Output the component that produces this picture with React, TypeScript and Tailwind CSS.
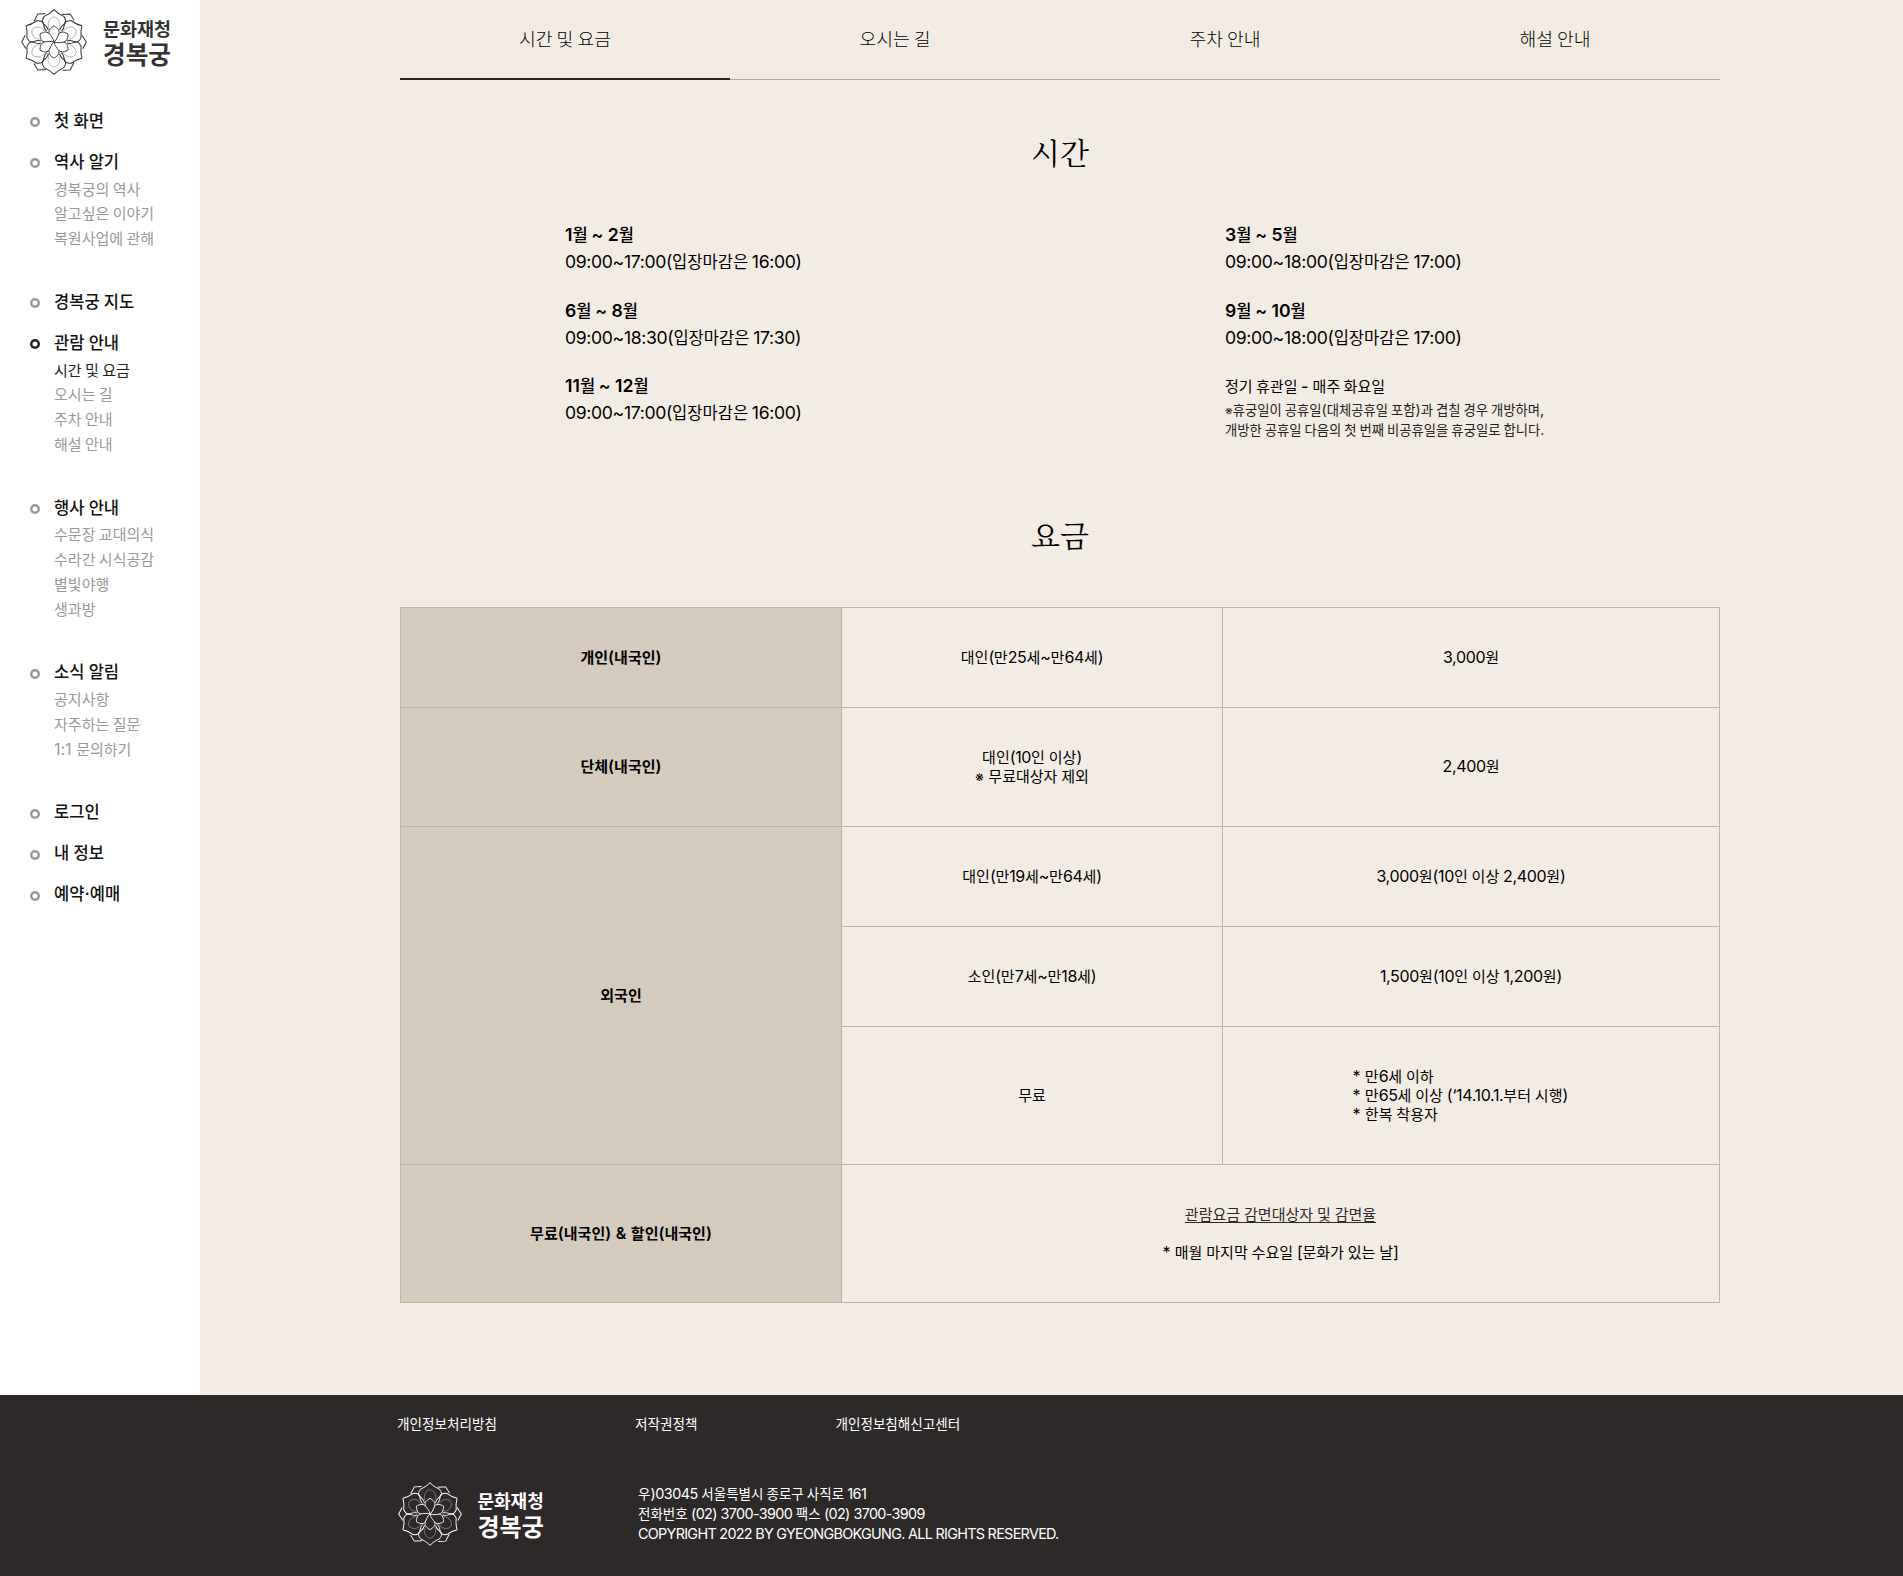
import type { ReactNode } from "react";

const HANGUL = /([\u3131-\uD79D][\u3131-\uD79D ]*)/;

/* Sets Hangul runs in Noto Sans and everything else in Inter. */
function T({ children }: { children: string }) {
  return (
    <>
      {children.split(HANGUL).map((run, i) =>
        i % 2 ? (
          <span key={i} className="font-['Noto_Sans_CJK_KR',sans-serif] text-[0.94em] leading-none tracking-normal">
            {run}
          </span>
        ) : (
          run
        ),
      )}
    </>
  );
}

function Flower({ className }: { className: string }) {
  return (
    <svg viewBox="-98 -98 196 196" className={className} fill="none" stroke="currentColor" strokeWidth="3" strokeLinejoin="round">
      {[0, 60, 120, 180, 240, 300].map((a) => (
        <g key={a} transform={`rotate(${a})`}>
          <path d="M0-96C-9-86-20-80-29-76C-36-66-38-60-31-53C-30-44-28-37-22-32" />
          <path d="M0-96C9-86 20-80 29-76C36-66 38-60 31-53C30-44 28-37 22-32" />
          <path d="M24-82L48-83L60-64" />
          <path d="M0 0C-2-12-9-17-14-25C-18-36-8-43 0-48C8-43 18-36 14-25" strokeWidth="2.6" />
          <path d="M-14-41C-18-48-18-54-16-60C-12-70-6-74 0-74C6-74 12-70 16-60C18-54 18-48 14-41" strokeWidth="2" opacity="0.5" />
        </g>
      ))}
    </svg>
  );
}

function Logo({ light = false }: { light?: boolean }) {
  return (
    <div className="flex items-center font-['Noto_Sans_CJK_KR',sans-serif]">
      <Flower className={light ? "size-16" : "size-[66px]"} />
      <div className={`flex flex-col pb-0.5 font-bold ${light ? "ml-[15.5px]" : "ml-4"}`}>
        <span className={light ? "text-[18px] leading-[24px]" : "text-[18.5px] leading-[24px]"}>문화재청</span>
        <span className={light ? "text-[24px] leading-[27px]" : "text-[24.6px] leading-[27px]"}>경복궁</span>
      </div>
    </div>
  );
}

const menu: { title: string; active?: boolean; items?: string[] }[] = [
  { title: "첫 화면" },
  { title: "역사 알기", items: ["경복궁의 역사", "알고싶은 이야기", "복원사업에 관해"] },
  { title: "경복궁 지도" },
  { title: "관람 안내", active: true, items: ["시간 및 요금", "오시는 길", "주차 안내", "해설 안내"] },
  { title: "행사 안내", items: ["수문장 교대의식", "수라간 시식공감", "별빛야행", "생과방"] },
  { title: "소식 알림", items: ["공지사항", "자주하는 질문", "1:1 문의하기"] },
  { title: "로그인" },
  { title: "내 정보" },
  { title: "예약·예매" },
];

function Sidebar() {
  return (
    <aside className="w-[200px] shrink-0 bg-white">
      <div className="flex h-[107.5px] items-start pl-[21px] pt-[9px] text-[#333]">
        <Logo />
      </div>
      <nav>
        {menu.map((m) => (
          <div key={m.title} className={m.items ? "mb-[38.4px]" : "mb-[13.8px]"}>
            <div className="flex h-[27.2px] items-center pl-[30px] text-[17.6px] font-medium text-[#111] [word-spacing:0.03em]">
              <span className={`mr-[14px] mt-0.5 size-2.5 rounded-full ${m.active ? "shadow-[inset_0_0_0_2.5px_#222]" : "shadow-[inset_0_0_0_2.5px_#999]"}`} />
              <span className="whitespace-pre"><T>{m.title}</T></span>
            </div>
            {m.items?.map((s, i) => (
              <div key={s} className={`h-[24.8px] pl-[54px] leading-[26.2px] ${m.active && i === 0 ? "text-[#222]" : "text-[#999]"}`}>
                <T>{s}</T>
              </div>
            ))}
          </div>
        ))}
      </nav>
    </aside>
  );
}

function Hours({ title, time }: { title: string; time: string }) {
  return (
    <div className="h-[75.6px] pl-[165px] text-[17.6px] leading-[27px]">
      <p className="font-semibold [&>span]:font-medium"><T>{title}</T></p>
      <p className="tracking-[-0.019em]"><T>{time}</T></p>
    </div>
  );
}

function Th({ children, rowSpan }: { children: string; rowSpan?: number }) {
  return (
    <th rowSpan={rowSpan} className="border border-[#beb4a8] bg-[#d4cabd] font-semibold tracking-normal">
      <T>{children}</T>
    </th>
  );
}

function Td({ children, colSpan }: { children: ReactNode; colSpan?: number }) {
  return (
    <td colSpan={colSpan} className="border border-[#beb4a8] text-center">
      {children}
    </td>
  );
}

function Title({ children }: { children: string }) {
  return <h2 className="text-center font-['Noto_Serif_CJK_KR',serif] text-[30px] leading-[40px]">{children}</h2>;
}

export default function App() {
  return (
    <div className="h-[1576px] w-[1903px] overflow-hidden bg-[#f3ece4] font-['Inter','Noto_Sans_CJK_KR',sans-serif] text-[16px] text-black">
      <div className="flex h-[1395px]">
        <Sidebar />
        <main className="ml-[200px] w-[1320px]">
          <div className="flex h-20 text-center text-[19.4px] font-light leading-[78px] text-black">
            {["시간 및 요금", "오시는 길", "주차 안내", "해설 안내"].map((t, i) => (
              <div key={t} className={`flex-1 ${i === 0 ? "border-b-2 border-[#2d2929]" : "border-b border-[#aaa]"}`}>
                <T>{t}</T>
              </div>
            ))}
          </div>

          <div className="pt-[51px]"><Title>시간</Title></div>
          <div className="grid grid-cols-2 pt-[50px]">
            <Hours title="1월 ~ 2월" time="09:00~17:00(입장마감은 16:00)" />
            <Hours title="3월 ~ 5월" time="09:00~18:00(입장마감은 17:00)" />
            <Hours title="6월 ~ 8월" time="09:00~18:30(입장마감은 17:30)" />
            <Hours title="9월 ~ 10월" time="09:00~18:00(입장마감은 17:00)" />
            <Hours title="11월 ~ 12월" time="09:00~17:00(입장마감은 16:00)" />
            <div className="pl-[165px]">
              <p className="font-medium leading-[28px] [&>span]:font-normal"><T>정기 휴관일 - 매주 화요일</T></p>
              <div className="text-[14.2px] leading-[20px] text-[#222]">
                <p><span className="text-[12px] leading-none">※</span><T>휴궁일이 공휴일(대체공휴일 포함)과 겹칠 경우 개방하며,</T></p>
                <p><T>개방한 공휴일 다음의 첫 번째 비공휴일을 휴궁일로 합니다.</T></p>
              </div>
            </div>
          </div>

          <div className="pt-[66px]"><Title>요금</Title></div>
          <table className="mt-[53px] w-[1319px] table-fixed border-collapse leading-[19px] tracking-[-0.022em] [word-spacing:0.03em]">
            <colgroup>
              <col className="w-[441px]" />
              <col className="w-[381px]" />
              <col className="w-[497px]" />
            </colgroup>
            <tbody>
              <tr className="h-[100px]">
                <Th>개인(내국인)</Th>
                <Td><T>대인(만25세~만64세)</T></Td>
                <Td><T>3,000원</T></Td>
              </tr>
              <tr className="h-[119px]">
                <Th>단체(내국인)</Th>
                <Td>
                  <T>대인(10인 이상)</T><br />
                  <span className="text-[14px] leading-none">※</span> <T>무료대상자 제외</T>
                </Td>
                <Td><T>2,400원</T></Td>
              </tr>
              <tr className="h-[100px]">
                <Th rowSpan={3}>외국인</Th>
                <Td><T>대인(만19세~만64세)</T></Td>
                <Td><T>3,000원(10인 이상 2,400원)</T></Td>
              </tr>
              <tr className="h-[100px]">
                <Td><T>소인(만7세~만18세)</T></Td>
                <Td><T>1,500원(10인 이상 1,200원)</T></Td>
              </tr>
              <tr className="h-[138px]">
                <Td><T>무료</T></Td>
                <Td>
                  <div className="pl-[129.5px] text-left">
                    <T>* 만6세 이하</T><br />
                    <T>* 만65세 이상 (‘14.10.1.부터 시행)</T><br />
                    <T>* 한복 착용자</T>
                  </div>
                </Td>
              </tr>
              <tr className="h-[138px]">
                <Th>무료(내국인) & 할인(내국인)</Th>
                <Td colSpan={2}>
                  <p className="mb-[19px] text-[#2d2929] underline underline-offset-2"><T>관람요금 감면대상자 및 감면율</T></p>
                  <p><T>* 매월 마지막 수요일 [문화가 있는 날]</T></p>
                </Td>
              </tr>
            </tbody>
          </table>
        </main>
      </div>

      <footer className="h-[181px] bg-[#2d2929] pl-[397px] pt-[19px] text-[14.4px] leading-[20px] text-white">
        <div className="flex gap-[138px]">
          <span className="text-[14.45px]"><T>개인정보처리방침</T></span>
          <span className="text-[14.45px]"><T>저작권정책</T></span>
          <span className="text-[14.45px]"><T>개인정보침해신고센터</T></span>
        </div>
        <div className="flex pl-px pt-12">
          <div className="w-[240px]"><Logo light /></div>
          <div className="pt-[2px]">
            <p className="tracking-[-0.035em]"><T>우)03045 서울특별시 종로구 사직로 161</T></p>
            <p className="tracking-[-0.045em] [word-spacing:0.02em]"><T>전화번호 (02) 3700-3900 팩스 (02) 3700-3909</T></p>
            <p className="tracking-[-0.049em]">COPYRIGHT 2022 BY GYEONGBOKGUNG. ALL RIGHTS RESERVED.</p>
          </div>
        </div>
      </footer>
    </div>
  );
}
